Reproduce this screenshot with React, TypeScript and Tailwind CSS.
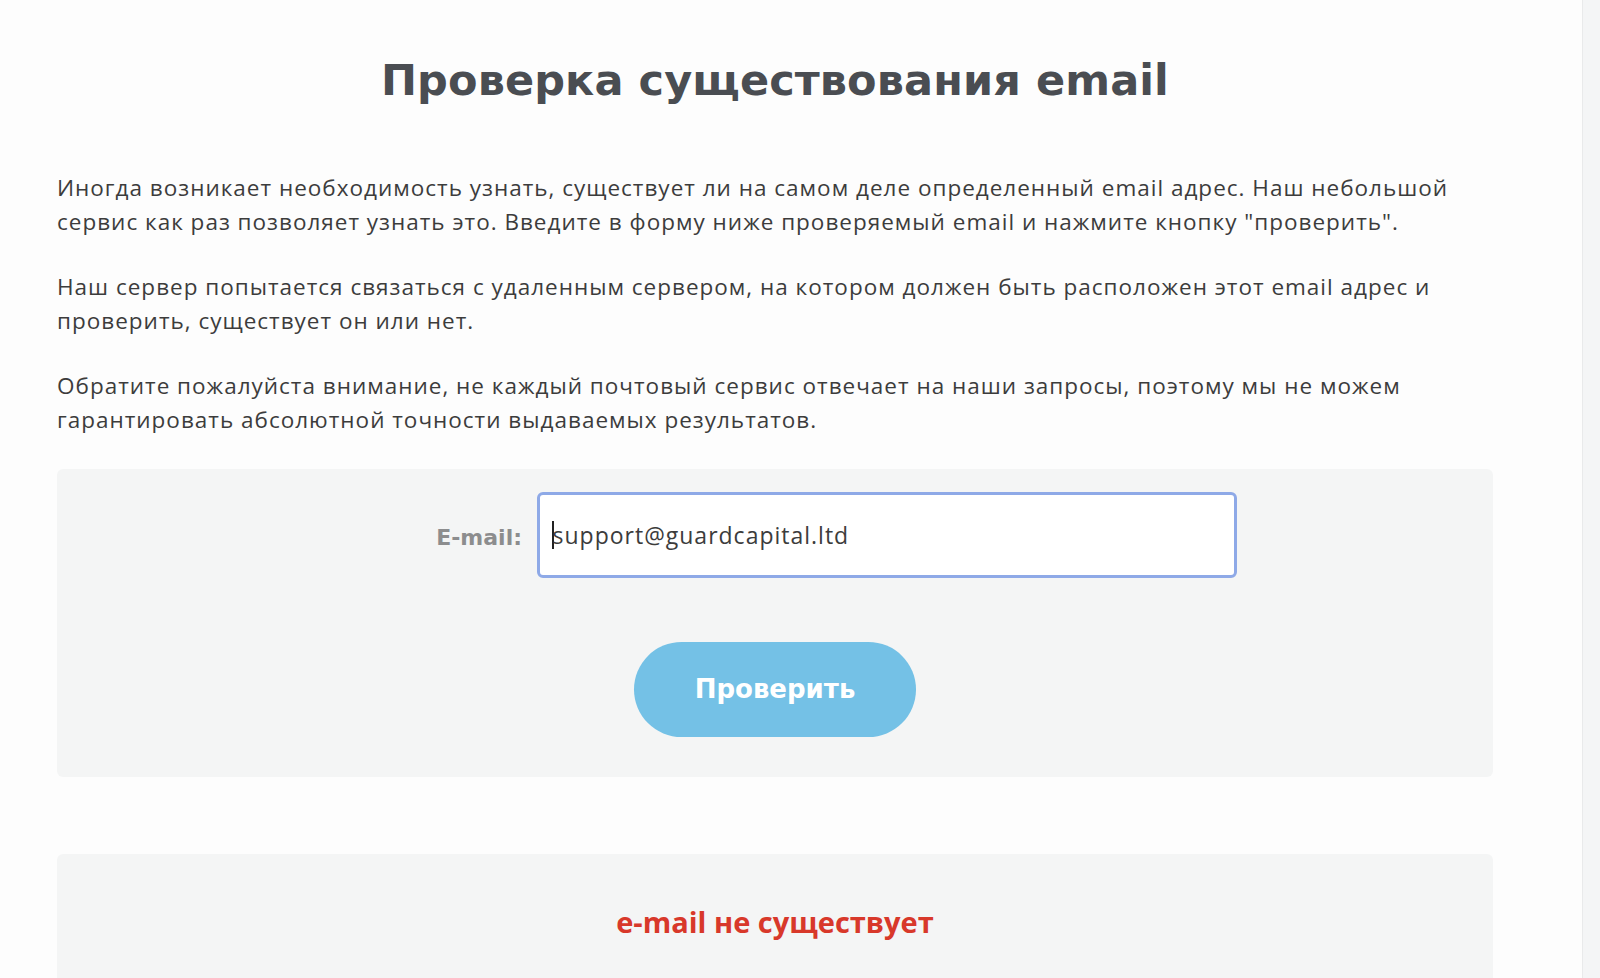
import React from "react";

const body = { fontFamily: "'Open Sans', 'Noto Sans', sans-serif" };
const heavy = { fontFamily: "'DejaVu Sans', 'Open Sans', sans-serif" };

export default function App() {
  return (
    <div className="flex h-[978px] w-[1600px] overflow-hidden bg-[#fdfdfd]">
      <div className="flex-1">
        <div className="ml-[57px] w-[1436px]">
          <h1
            className="pt-[52px] text-center text-[43px] font-bold leading-[56px] tracking-[0.1px] text-[#4a4d52]"
            style={heavy}
          >
            Проверка существования email
          </h1>
          <div className="mt-[63px] text-[22.5px] font-medium leading-[34px] tracking-[1px] text-[#3c3c3c]" style={body}>
            <p>
              Иногда возникает необходимость узнать, существует ли на самом деле определенный email адрес. Наш небольшой
              <br />
              сервис как раз позволяет узнать это. Введите в форму ниже проверяемый email и нажмите кнопку "проверить".
            </p>
            <p className="mt-[31px]">
              Наш сервер попытается связаться с удаленным сервером, на котором должен быть расположен этот email адрес и
              <br />
              проверить, существует он или нет.
            </p>
            <p className="mt-[31px]">
              Обратите пожалуйста внимание, не каждый почтовый сервис отвечает на наши запросы, поэтому мы не можем
              <br />
              гарантировать абсолютной точности выдаваемых результатов.
            </p>
          </div>

          <div className="mt-[32px] h-[308px] rounded-md bg-[#f4f5f5] pt-[23px]">
            <div className="flex items-center">
              <label
                className="mt-[5px] w-[480px] pr-[15px] text-right text-[22px] font-bold text-[#8c8d8e]"
                style={heavy}
              >
                E-mail:
              </label>
              <div className="flex h-[86px] w-[700px] items-center rounded-[6px] border-[3px] border-[#8ea9e7] bg-white pl-[12px]">
                <span className="mr-[-1px] h-[28px] w-[1.5px] bg-[#222]" />
                <span className="text-[23px] font-medium tracking-[1px] text-[#3c3c3c]" style={body}>
                  support@guardcapital.ltd
                </span>
              </div>
            </div>
            <div className="mt-[64px] flex justify-center">
              <button
                className="h-[95px] w-[282px] rounded-full bg-[#74c1e6] text-[26px] font-bold text-white"
                style={heavy}
              >
                Проверить
              </button>
            </div>
          </div>

          <div className="mt-[77px] h-[200px] rounded-md bg-[#f4f5f5] pt-[46px] text-center">
            <span className="text-[29px] font-bold text-[#d8382a]" style={body}>
              e-mail не существует
            </span>
          </div>
        </div>
      </div>
      <div className="w-[18px] border-l border-[#e9eaeb] bg-[#f4f5f6]" />
    </div>
  );
}
